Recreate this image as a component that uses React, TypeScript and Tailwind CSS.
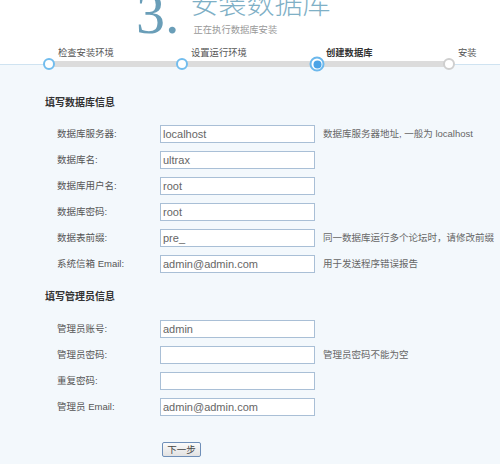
import type { ReactNode } from 'react'

const FONT = { fontFamily: '"Liberation Sans", "Noto Sans CJK SC", sans-serif' }

type Field = { label: string; value: string; hint?: string }

const dbFields: Field[] = [
  { label: '数据库服务器:', value: 'localhost', hint: '数据库服务器地址, 一般为 localhost' },
  { label: '数据库名:', value: 'ultrax' },
  { label: '数据库用户名:', value: 'root' },
  { label: '数据库密码:', value: 'root' },
  { label: '数据表前缀:', value: 'pre_', hint: '同一数据库运行多个论坛时，请修改前缀' },
  { label: '系统信箱 Email:', value: 'admin@admin.com', hint: '用于发送程序错误报告' },
]

const adminFields: Field[] = [
  { label: '管理员账号:', value: 'admin' },
  { label: '管理员密码:', value: '', hint: '管理员密码不能为空' },
  { label: '重复密码:', value: '' },
  { label: '管理员 Email:', value: 'admin@admin.com' },
]

const steps = [
  { label: '检查安装环境', left: 49, state: 'done' },
  { label: '设置运行环境', left: 182, state: 'done' },
  { label: '创建数据库', left: 317, state: 'current' },
  { label: '安装', left: 449, state: 'todo' },
]

function StepDot({ state }: { state: string }) {
  if (state === 'current') {
    return (
      <span className="flex h-[15px] w-[15px] items-center justify-center rounded-full border-2 border-[#6cb8ec] bg-white">
        <span className="h-[8px] w-[8px] rounded-full bg-[#4ba3e6]" />
      </span>
    )
  }
  return (
    <span
      className={
        state === 'done'
          ? 'block h-[12px] w-[12px] rounded-full border-2 border-[#72bdee] bg-white'
          : 'block h-[12px] w-[12px] rounded-full border-2 border-[#cfcfcf] bg-white'
      }
    />
  )
}

function Steps() {
  return (
    <div className="relative h-[19px]">
      {/* grey track between the first and last step */}
      <div className="absolute left-[49px] top-[16px] z-10 h-[6px] w-[400px] bg-[#dcdcdc]" />
      {steps.map((s) => (
        <div key={s.label}>
          <span
            className={
              s.state === 'current'
                ? 'absolute top-[2px] text-[9.3px] font-bold leading-[12px] text-[#333]'
                : 'absolute top-[2px] text-[9.3px] leading-[12px] text-[#555]'
            }
            style={{ left: s.left + 9 }}
          >
            {s.label}
          </span>
          <span
            className="absolute z-20 -translate-x-1/2 -translate-y-1/2"
            style={{ left: s.left, top: 19 }}
          >
            <StepDot state={s.state} />
          </span>
        </div>
      ))}
    </div>
  )
}

function SectionTitle({ children }: { children: ReactNode }) {
  return <h2 className="pl-[45px] text-[10px] font-bold leading-[12px] text-[#333]">{children}</h2>
}

function FieldRows({ fields }: { fields: Field[] }) {
  return (
    <div className="flex flex-col gap-[8px] pl-[57px]">
      {fields.map((f) => (
        <div key={f.label} className="flex h-[18px] items-center">
          <span className="w-[103px] text-[9.5px] text-[#555]">{f.label}</span>
          <input
            readOnly
            value={f.value}
            className="h-[18px] w-[155px] border border-[#a9bfd6] bg-white px-[2px] text-[11px] text-[#666] outline-none"
            style={FONT}
          />
          {f.hint && <span className="ml-[8px] text-[9.5px] text-[#666]">{f.hint}</span>}
        </div>
      ))}
    </div>
  )
}

export default function App() {
  return (
    <div className="h-[464px] w-[500px] overflow-hidden bg-[#f3f8fc]" style={FONT}>
      <header className="h-[65px] border-b border-[#cfe3f1] bg-white">
        <div className="flex h-[45px] items-start overflow-hidden pl-[136px]">
          <span
            className="-mt-[15px] text-[58px] leading-[58px] text-[#6a9eb8]"
            style={{ fontFamily: '"Liberation Serif", serif' }}
          >
            3.
          </span>
          <div className="ml-[11px] flex flex-col">
            <span
              className="-mt-[14px] text-[28px] leading-[32px] text-[#7fb0c6]"
              style={{ fontFamily: '"Noto Sans CJK SC", sans-serif', fontWeight: 300 }}
            >
              安装数据库
            </span>
            <span className="mt-[6px] pl-[3px] text-[9.3px] leading-[12px] text-[#999]">正在执行数据库安装</span>
          </div>
        </div>
        <Steps />
      </header>

      <main className="pt-[32px]">
        <SectionTitle>填写数据库信息</SectionTitle>
        <div className="mt-[16px]">
          <FieldRows fields={dbFields} />
        </div>
        <div className="mt-[18px]">
          <SectionTitle>填写管理员信息</SectionTitle>
        </div>
        <div className="mt-[17px]">
          <FieldRows fields={adminFields} />
        </div>
        <div className="mt-[26px] pl-[162px]">
          <button
            type="button"
            className="flex h-[15px] w-[39px] items-center justify-center rounded-[2px] border border-[#6f8fb8] bg-gradient-to-b from-[#fbfbfb] to-[#e2e2e2] text-[9.5px] leading-none text-[#444]"
          >
            下一步
          </button>
        </div>
      </main>
    </div>
  )
}
